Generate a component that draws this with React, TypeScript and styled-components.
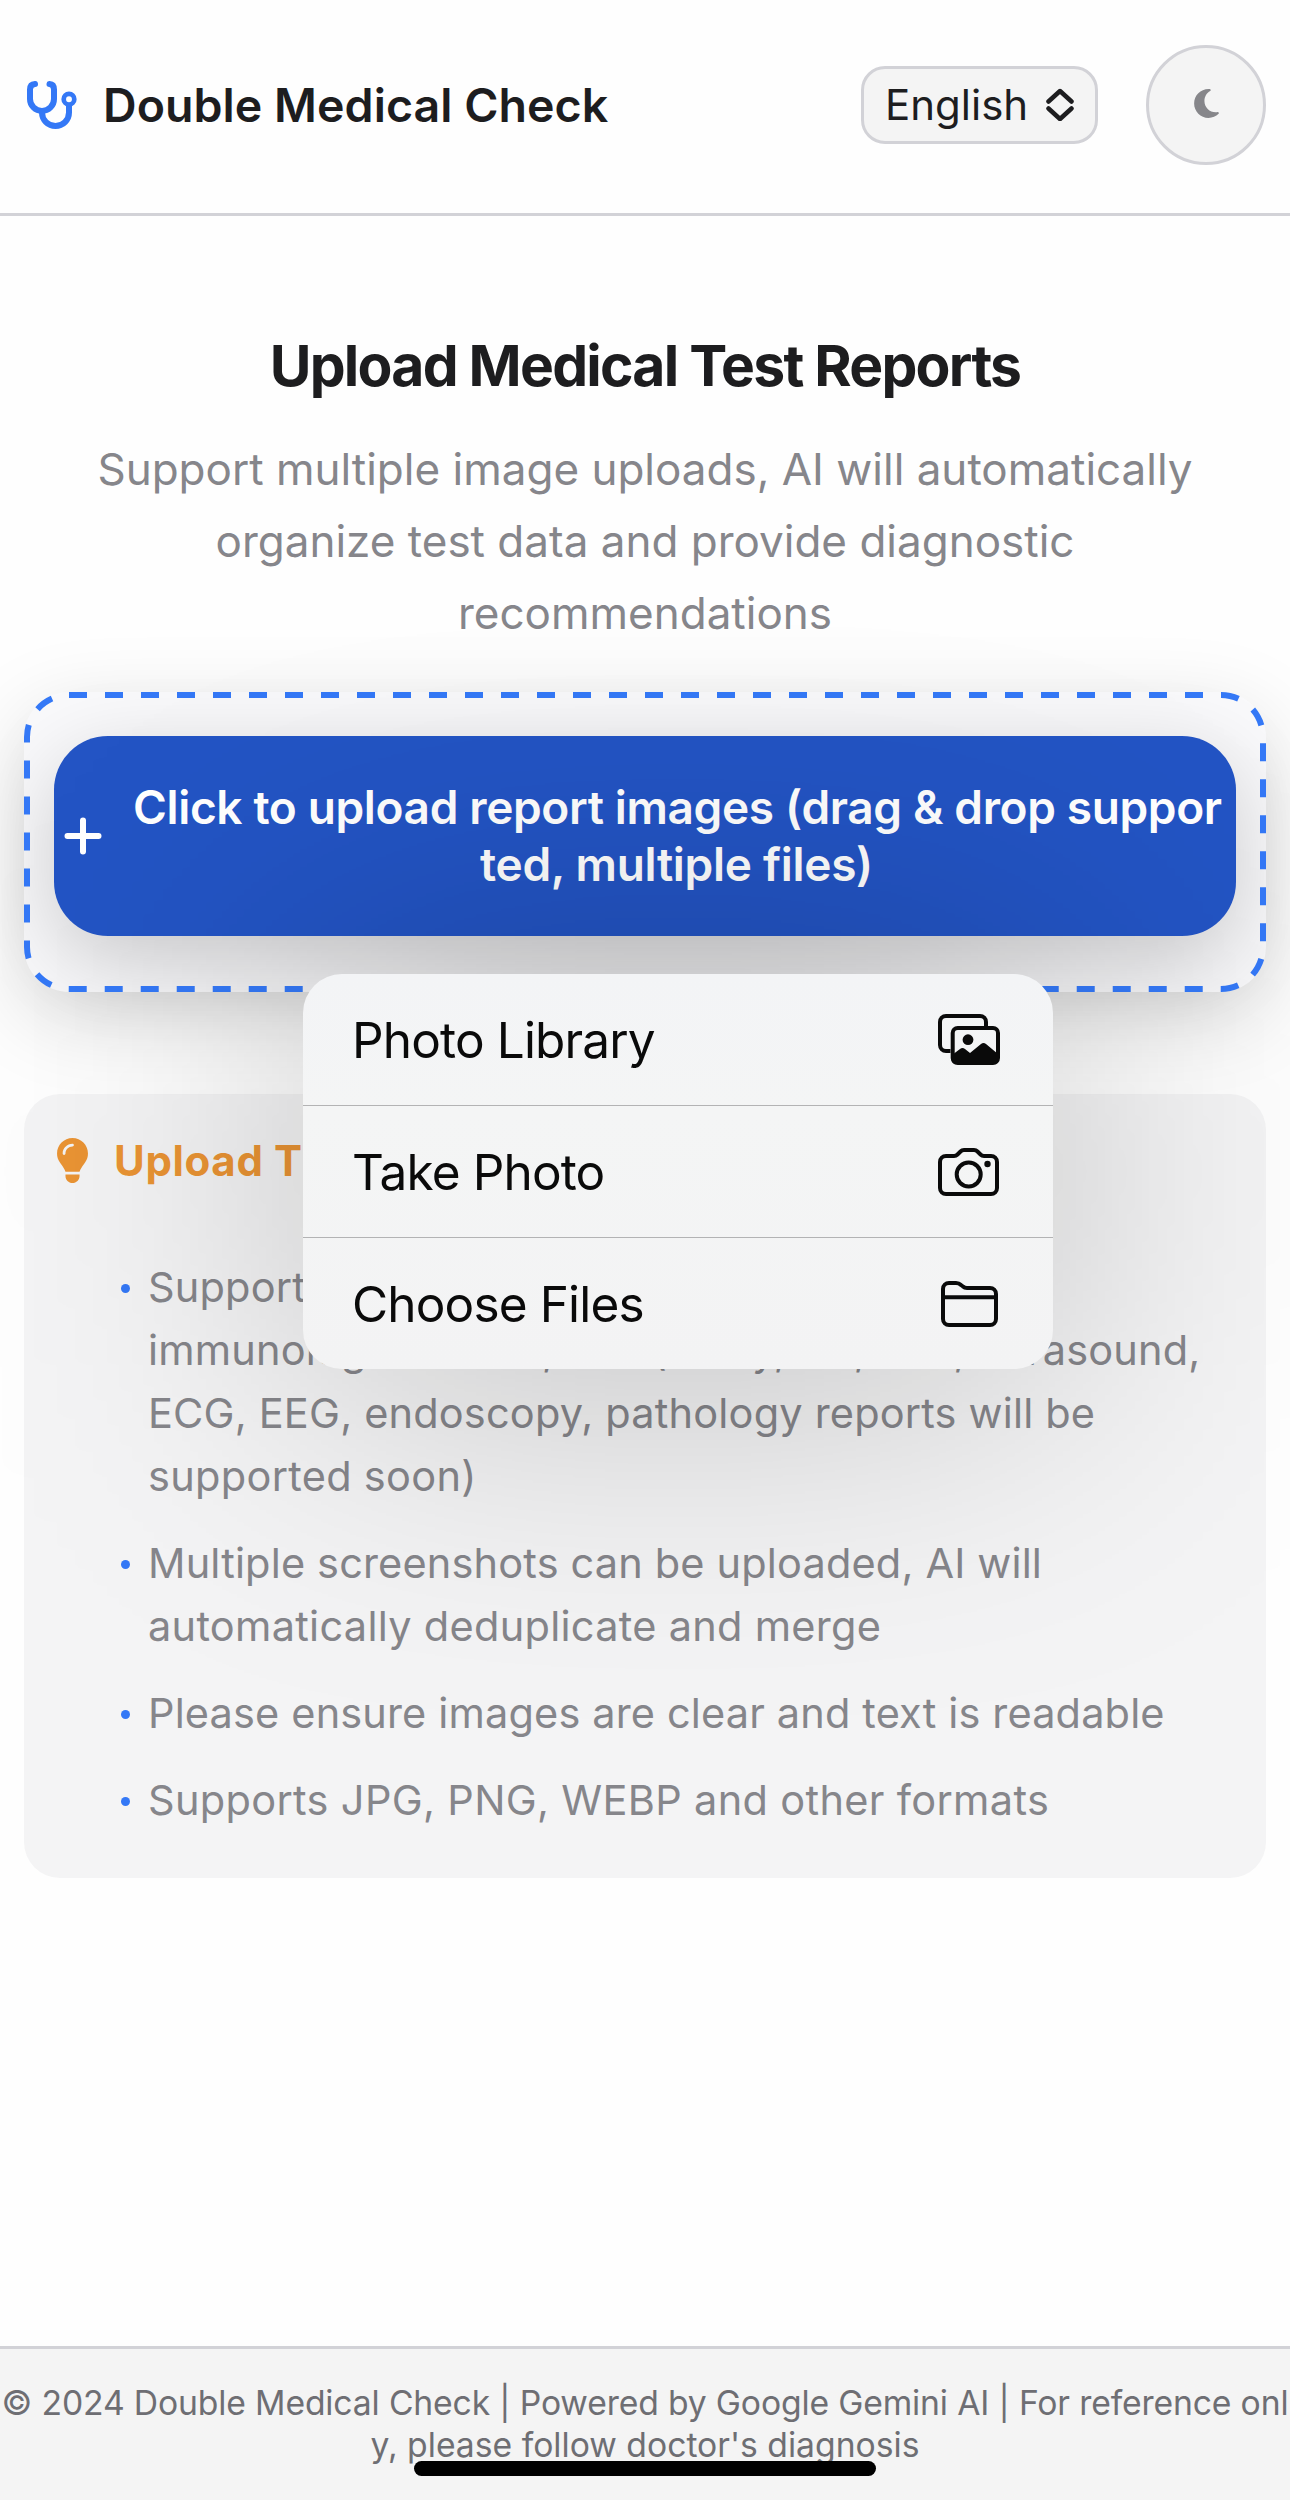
import React from 'react';
import styled, { createGlobalStyle, css } from 'styled-components';
import { FaLightbulb, FaMoon } from 'react-icons/fa6';

const Global = createGlobalStyle`
  * { box-sizing: border-box; }
  body { margin: 0; background: #fefefe; }
  h1, h2, h3, p, ul { margin: 0; padding: 0; }
`;

const Page = styled.div`
  width: 1290px;
  height: 2500px;
  display: flex;
  flex-direction: column;
  overflow: hidden;
  position: relative;
  font-family: Inter, 'Liberation Sans', sans-serif;
  color: #1d1d1f;
`;

const Header = styled.header`
  height: 216px;
  display: flex;
  align-items: center;
  padding: 0 24px 3px;
  border-bottom: 3px solid #d2d2d7;
`;

const Brand = styled.div`
  display: flex;
  align-items: center;
  gap: 25px;
  flex: 1;
`;

const BrandName = styled.h1`
  font-size: 46.5px;
  font-weight: 600;
  line-height: 60px;
  letter-spacing: 0.05px;
  white-space: nowrap;
`;

const LanguageSelect = styled.button`
  width: 237px;
  height: 78px;
  display: flex;
  align-items: center;
  justify-content: space-between;
  padding: 0 21px 2px;
  margin-right: 48px;
  border: 3px solid #d2d2d7;
  border-radius: 24px;
  background: #f4f4f4;
  color: #1d1d1f;
  font-family: inherit;
  font-size: 42px;
  letter-spacing: 0;
`;

const ThemeToggle = styled.button`
  width: 120px;
  height: 120px;
  display: flex;
  align-items: center;
  justify-content: center;
  padding: 0 0 4px;
  border: 3px solid #d2d2d7;
  border-radius: 50%;
  background: #f4f4f4;
  color: #86868a;
`;

const Main = styled.main`
  flex: 1;
  display: flex;
  flex-direction: column;
  padding: 110px 24px 0;
`;

const Intro = styled.section`
  display: flex;
  flex-direction: column;
  align-items: center;
  text-align: center;
  height: 366px;
`;

const Heading = styled.h2`
  font-size: 57px;
  line-height: 80px;
  font-weight: 700;
  letter-spacing: -1.75px;
  white-space: nowrap;
`;

const Lead = styled.p`
  margin-top: 27px;
  font-size: 44px;
  line-height: 72px;
  color: #86868b;
`;

const Line = styled.span<{ $track?: number }>`
  display: block;
  white-space: nowrap;
  letter-spacing: ${(p) => p.$track ?? 0}px;
`;

const DropZone = styled.section`
  position: relative;
  height: 300px;
  padding: 44px 30px 0;
  border-radius: 45px;
  background: #f9f9fb;
  box-shadow: 0 24px 84px rgba(0, 0, 0, 0.15);
`;

const DashedOutline = styled.svg`
  position: absolute;
  inset: 0;
  width: 100%;
  height: 100%;
  pointer-events: none;
`;

const UploadButton = styled.button`
  width: 100%;
  height: 200px;
  display: flex;
  align-items: center;
  padding: 0 16px 0 10px;
  gap: 31px;
  border: 0;
  border-radius: 54px;
  background: #2354c4;
  box-shadow: 0 24px 84px rgba(0, 0, 0, 0.18);
  color: #fff;
  font-family: inherit;
  font-size: 46px;
  font-weight: 600;
  line-height: 57px;
  text-align: center;

  svg {
    flex-shrink: 0;
  }
`;

const UploadLabel = styled.span`
  flex: 1;
  min-width: 0;
`;

const Tips = styled.section`
  margin-top: 102px;
  height: 784px;
  padding: 35px 26px;
  border-radius: 36px;
  background: #f4f4f5;
`;

const TipsTitle = styled.h3`
  display: flex;
  align-items: center;
  gap: 19px;
  height: 62px;
  font-size: 42px;
  font-weight: 700;
  letter-spacing: 0.65px;
  color: #ea9434;
`;

const TipList = styled.ul`
  list-style: none;
  display: flex;
  flex-direction: column;
  gap: 24px;
  padding: 65px 0 0 98px;
`;

const Tip = styled.li`
  position: relative;
  font-size: 41.5px;
  line-height: 63px;
  color: #86868b;

  &::before {
    content: '';
    position: absolute;
    left: -27px;
    top: 28px;
    width: 9px;
    height: 9px;
    border-radius: 50%;
    background: #3478f6;
  }
`;

const Footer = styled.footer`
  height: 154px;
  padding-top: 33px;
  border-top: 3px solid #d2d2d7;
  background: #f4f4f4;
  color: #6e6e73;
  font-size: 33.7px;
  line-height: 42px;
  text-align: center;
`;

const MenuLayer = styled.div`
  position: absolute;
  left: 303px;
  top: 974px;
  width: 750px;
  height: 395px;
  isolation: isolate;

  &::before {
    content: '';
    position: absolute;
    inset: 0;
    z-index: -1;
    border-radius: 39px;
    background: rgba(0, 0, 0, 0.235);
    filter: blur(165px);
  }
`;

const Menu = styled.div`
  height: 100%;
  display: flex;
  flex-direction: column;
  border-radius: 39px;
  background: linear-gradient(#f3f4f6, #f4f5f5 35%, #f3f3f4);
`;

const MenuItem = styled.div<{ $last?: boolean }>`
  flex: 1;
  display: flex;
  align-items: center;
  justify-content: space-between;
  padding: 0 53px 0 49px;
  font-size: 49.5px;
  letter-spacing: -0.85px;
  color: #0a0a0a;
  ${(p) =>
    !p.$last &&
    css`
      border-bottom: 1px solid #b3b3b4;
    `}
`;

const HomeIndicator = styled.div`
  position: absolute;
  left: 414px;
  top: 2461px;
  width: 462px;
  height: 15px;
  border-radius: 8px;
  background: #000;
`;

const Stethoscope = () => (
  <svg width="54" height="48" viewBox="0 0 54 48" fill="none" stroke="#3478f6" strokeWidth="6" strokeLinecap="round" strokeLinejoin="round">
    <path d="M11 3C7.500 3.200 6 5 6 8.500V18a12 12 0 0 0 24 0V8.500C30 5 28.500 3.200 25.500 3" />
    <path d="M18 31v.5a13.500 13.500 0 0 0 27 0V25" />
    <circle cx="45" cy="18.200" r="5.300" strokeWidth="4.700" />
  </svg>
);

const PhotosIcon = () => (
  <svg width="62" height="52" viewBox="0 0 62 52" fill="none" stroke="currentColor" strokeWidth="4">
    <path d="M12.500 37H8a6 6 0 0 1-6-6V8a6 6 0 0 1 6-6h34a6 6 0 0 1 6 6v4" />
    <rect x="14.700" y="14" width="45.300" height="35" rx="5" />
    <circle cx="30" cy="25.700" r="5.400" fill="currentColor" stroke="none" />
    <path d="M14 41l8-6q2.500-2 5 0l5 4 11-9q2.500-2 5 0l12 10v6q0 4-4 4H18q-4 0-4-4z" fill="currentColor" stroke="none" />
  </svg>
);

const CameraIcon = () => (
  <svg width="62" height="48" viewBox="0 0 62 48" fill="none" stroke="currentColor" strokeWidth="4" strokeLinejoin="round">
    <path d="M8 8h8q2 0 3.500-1.500l3-3Q24 2 26 2h10q2 0 3.500 1.500l3 3Q44 8 46 8h7a6 6 0 0 1 6 6v26a6 6 0 0 1-6 6H8a6 6 0 0 1-6-6V14a6 6 0 0 1 6-6z" />
    <circle cx="30.700" cy="26.500" r="12" />
    <circle cx="49.500" cy="16" r="3.200" fill="currentColor" stroke="none" />
  </svg>
);

const FolderIcon = () => (
  <svg width="62" height="46" viewBox="0 0 62 46" fill="none" stroke="currentColor" strokeWidth="4" strokeLinejoin="round">
    <path d="M5 38V8a6 6 0 0 1 6-6h7q3 0 5 2l2 1.500Q26.500 7 29 7h23a6 6 0 0 1 6 6v25a6 6 0 0 1-6 6H11a6 6 0 0 1-6-6z" />
    <path d="M5 16.300h53" />
  </svg>
);

export default function App() {
  return (
    <Page>
      <Global />
      <Header>
        <Brand>
          <Stethoscope />
          <BrandName>Double Medical Check</BrandName>
        </Brand>
        <LanguageSelect>
          English
          <svg width="28" height="34" viewBox="0 0 28 34" fill="none" stroke="currentColor" strokeWidth="4.500" strokeLinecap="round" strokeLinejoin="round">
            <path d="M2.500 14.500L14 4l11.500 10.500M2.500 21.500L14 32l11.500-10.500" />
          </svg>
        </LanguageSelect>
        <ThemeToggle aria-label="Dark mode">
          <FaMoon size={33} />
        </ThemeToggle>
      </Header>
      <Main>
        <Intro>
          <Heading>Upload Medical Test Reports</Heading>
          <Lead>
            <Line>Support multiple image uploads, AI will automatically</Line>
            <Line>organize test data and provide diagnostic</Line>
            <Line>recommendations</Line>
          </Lead>
        </Intro>
        <DropZone>
          <UploadButton>
            <svg width="38" height="38" viewBox="0 0 38 38" stroke="#fff" strokeWidth="6" strokeLinecap="round">
              <path d="M19 3.500v31M3.500 19h31" />
            </svg>
            <UploadLabel>
              <Line $track={-0.36}>Click to upload report images (drag &amp; drop suppor</Line>
              <Line $track={-0.3}>ted, multiple files)</Line>
            </UploadLabel>
          </UploadButton>
          <DashedOutline viewBox="0 0 1242 300" fill="none">
            <rect x="3" y="3" width="1236" height="294" rx="42" stroke="#3478f6" strokeWidth="6" strokeDasharray="18 18" />
          </DashedOutline>
        </DropZone>
        <Tips>
          <TipsTitle>
            <FaLightbulb size={45} />
            Upload Tips
          </TipsTitle>
          <TipList>
            <Tip>
              <Line $track={0.18}>Supports blood, urine, biochemical,</Line>
              <Line $track={0.18}>immunological tests, etc. (X-ray, CT, MRI, ultrasound,</Line>
              <Line $track={0.18}>ECG, EEG, endoscopy, pathology reports will be</Line>
              <Line $track={0.3}>supported soon)</Line>
            </Tip>
            <Tip>
              <Line $track={0.16}>Multiple screenshots can be uploaded, AI will</Line>
              <Line $track={0.28}>automatically deduplicate and merge</Line>
            </Tip>
            <Tip>
              <Line $track={0.15}>Please ensure images are clear and text is readable</Line>
            </Tip>
            <Tip>
              <Line $track={0.33}>Supports JPG, PNG, WEBP and other formats</Line>
            </Tip>
          </TipList>
        </Tips>
      </Main>
      <Footer>
        <Line $track={-0.15}>© 2024 Double Medical Check | Powered by Google Gemini AI | For reference onl</Line>
        <Line>y, please follow doctor's diagnosis</Line>
      </Footer>
      <MenuLayer>
        <Menu>
          <MenuItem>
            <span>Photo Library</span>
            <PhotosIcon />
          </MenuItem>
          <MenuItem>
            <span>Take Photo</span>
            <CameraIcon />
          </MenuItem>
          <MenuItem $last>
            <span>Choose Files</span>
            <FolderIcon />
          </MenuItem>
        </Menu>
      </MenuLayer>
      <HomeIndicator />
    </Page>
  );
}
